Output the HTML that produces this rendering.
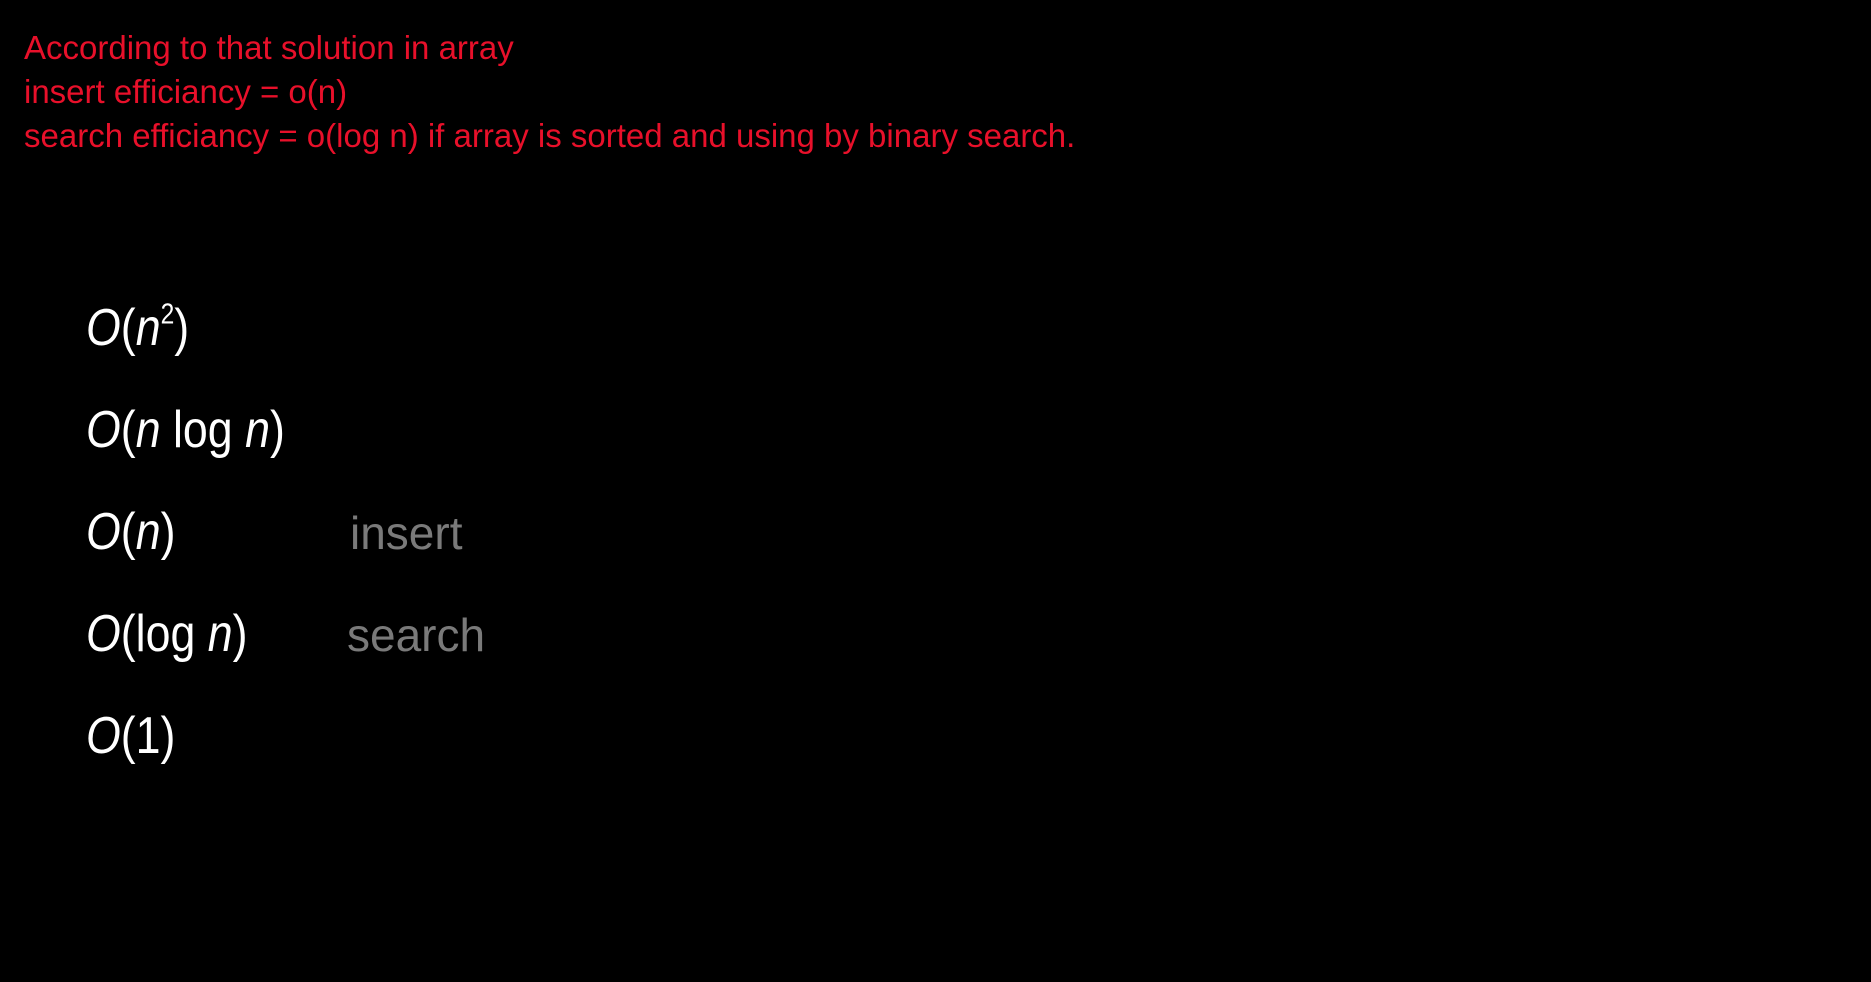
<!DOCTYPE html>
<html><head><meta charset="utf-8"><style>
html,body{margin:0;padding:0;background:#000;width:1871px;height:982px;overflow:hidden}
.r{position:absolute;left:24px;color:#e8102a;font-family:"Liberation Sans",sans-serif;font-size:33px;white-space:nowrap;transform-origin:left top;transform:scaleX(1.0)}
.f{position:absolute;left:86px;color:#fff;font-family:"Liberation Sans",sans-serif;font-size:52px;white-space:nowrap;line-height:1;transform-origin:left top;transform:scaleX(0.86)}
.g{position:absolute;color:#7a7a7a;font-family:"Liberation Sans",sans-serif;font-size:46px;line-height:1}
i{font-style:italic}
sup{font-size:0.55em;vertical-align:0.75em;line-height:0}
</style></head><body>
<div class="r" style="top:29px">According to that solution in array</div>
<div class="r" style="top:73px">insert efficiancy = o(n)</div>
<div class="r" style="top:117px">search efficiancy = o(log n) if array is sorted and using by binary search.</div>
<div class="f" style="top:302px"><i>O</i>(<i>n</i><sup>2</sup>)</div>
<div class="f" style="top:404px"><i>O</i>(<i>n</i> log <i>n</i>)</div>
<div class="f" style="top:506px"><i>O</i>(<i>n</i>)</div>
<div class="f" style="top:608px"><i>O</i>(log <i>n</i>)</div>
<div class="f" style="top:710px"><i>O</i>(1)</div>
<div class="g" style="left:350px;top:510px">insert</div>
<div class="g" style="left:347px;top:612px">search</div>
</body></html>
